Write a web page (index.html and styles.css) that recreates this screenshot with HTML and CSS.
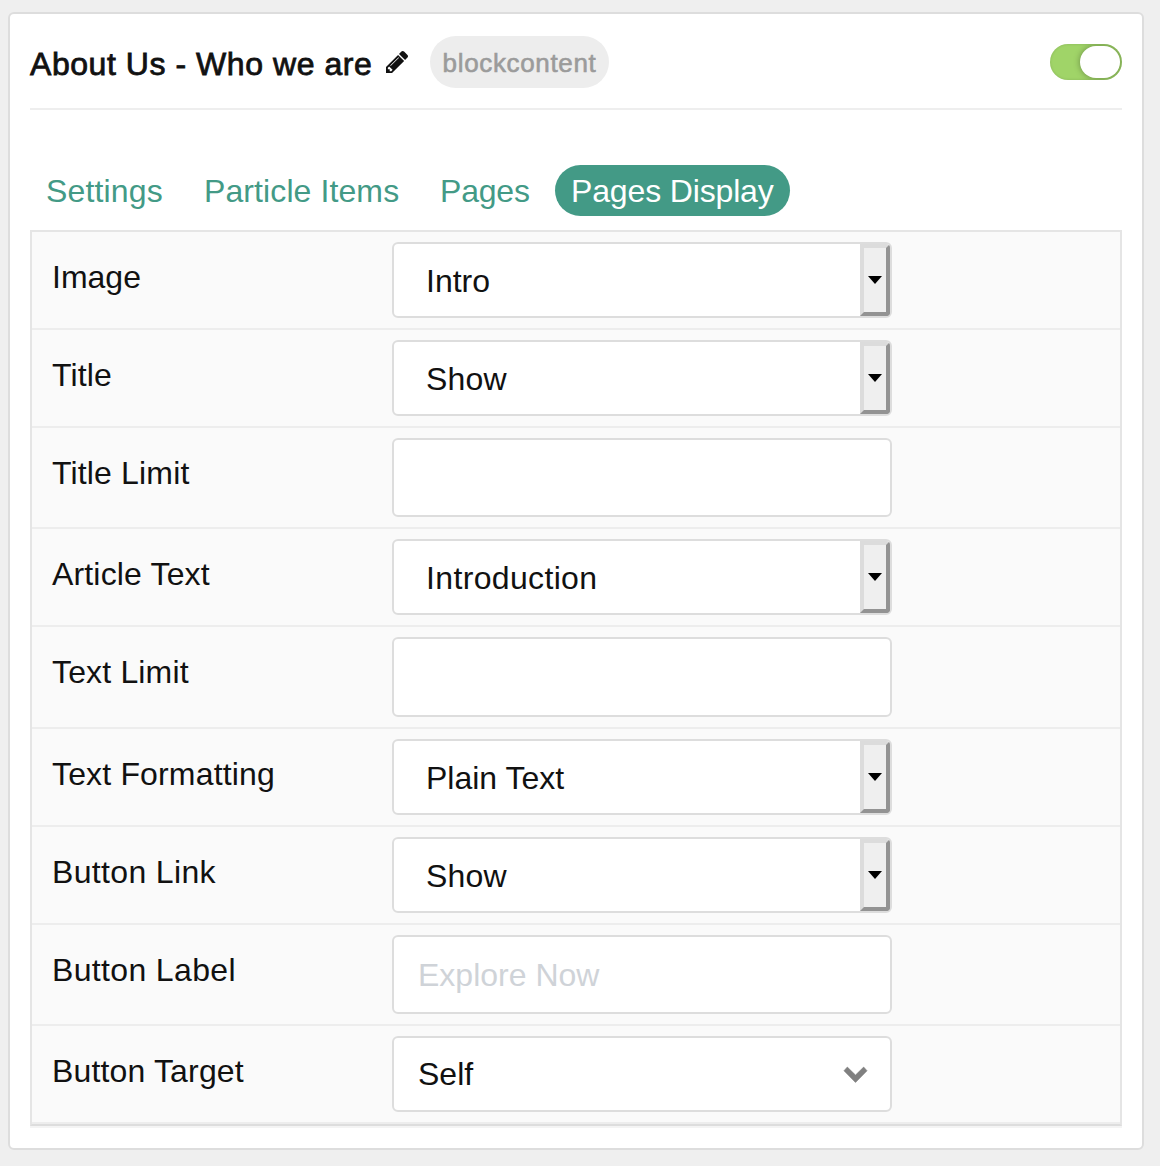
FILE: index.html
```html
<!DOCTYPE html>
<html lang="en">
<head>
<meta charset="utf-8">
<title>About Us - Who we are</title>
<link rel="stylesheet" href="styles.css">
</head>
<body>
<main class="card">
  <header class="card-header">
    <h1 class="title">About Us - Who we are</h1>
    <svg class="pencil" viewBox="128 149 1515 1515"><path d="M491 1536l91-91-235-235-91 91v107h128v128h107zm523-928q0-22-22-22-10 0-17 7l-542 542q-7 7-7 17 0 22 22 22 10 0 17-7l542-542q7-7 7-17zm-54-192l416 416-832 832h-416v-416zm683 96q0 53-37 90l-166 166-416-416 166-165q36-38 90-38 53 0 91 38l235 234q37 39 37 91z"/></svg>
    <span class="badge">blockcontent</span>
    <span class="toggle"><span class="knob"></span></span>
  </header>
  <nav class="tabs">
    <a class="tab tab-settings">Settings</a>
    <a class="tab tab-items">Particle Items</a>
    <a class="tab tab-pages">Pages</a>
    <a class="tab active">Pages Display</a>
  </nav>
  <section class="panel">
    <div class="row"><span class="label">Image</span><div class="field"><span class="value">Intro</span><span class="drop"><i class="caret"></i></span></div></div>
    <div class="row"><span class="label open">Title</span><div class="field"><span class="value open">Show</span><span class="drop"><i class="caret"></i></span></div></div>
    <div class="row text-row"><span class="label open">Title Limit</span><div class="field"></div></div>
    <div class="row"><span class="label open">Article Text</span><div class="field"><span class="value wide">Introduction</span><span class="drop"><i class="caret"></i></span></div></div>
    <div class="row text-row tall"><span class="label open">Text Limit</span><div class="field"></div></div>
    <div class="row"><span class="label open">Text Formatting</span><div class="field"><span class="value">Plain Text</span><span class="drop"><i class="caret"></i></span></div></div>
    <div class="row"><span class="label wide">Button Link</span><div class="field"><span class="value open">Show</span><span class="drop"><i class="caret"></i></span></div></div>
    <div class="row text-row"><span class="label wide">Button Label</span><div class="field"><span class="value placeholder">Explore Now</span></div></div>
    <div class="row"><span class="label open">Button Target</span><div class="field"><span class="value plain">Self</span><svg class="chevron" viewBox="0 0 69 46"><path d="M10 0L0 11L34.500 46L69 11L59 0L34.500 24Z"/></svg></div></div>
  </section>
</main>
</body>
</html>
```
FILE: styles.css
```css
* { box-sizing: border-box; }

body {
  margin: 0;
  padding: 12px 16px 16px 8px;
  background: #efefef;
  color: #111;
  font: 32px/40px "Liberation Sans", Arial, sans-serif;
}

.card {
  height: 1138px;
  padding: 0 20px;
  background: #fff;
  border: 2px solid #ddd;
  border-radius: 6px;
}

.card-header {
  display: flex;
  align-items: center;
  height: 96px;
  padding-top: 2px;
  border-bottom: 2px solid #eee;
}

.title {
  width: 356px;
  margin: 4px 0 0;
  font-size: 32px;
  font-weight: 400;
  line-height: 40px;
  white-space: nowrap;
  -webkit-text-stroke: 0.8px #111;
  letter-spacing: 0.55px;
}

.pencil {
  width: 22px;
  height: 22px;
  fill: #111;
}

.badge {
  width: 179px;
  height: 52px;
  margin-left: 22px;
  padding-top: 1px;
  border-radius: 26px;
  background: #ededed;
  color: #9b9b9b;
  font-size: 26px;
  line-height: 52px;
  text-align: center;
  -webkit-text-stroke: 0.6px #9b9b9b;
  letter-spacing: 0.65px;
}

.toggle {
  display: flex;
  justify-content: flex-end;
  width: 72px;
  height: 36px;
  margin-left: auto;
  padding: 2px;
  border-radius: 18px;
  background: #a0d468;
  box-shadow: inset 0 0 3px rgba(0, 0, 0, 0.15);
  overflow: hidden;
}

.knob {
  width: 40px;
  height: 32px;
  border-radius: 16px;
  background: #fff;
  box-shadow: 0 0 6px rgba(0, 0, 0, 0.35);
}

.tabs {
  display: flex;
  height: 51px;
  margin: 55px 0 14px;
}

.tab {
  padding: 0 16px;
  border-radius: 26px;
  color: #439a86;
  line-height: 52px;
  white-space: nowrap;
}

.tab-settings { width: 158px; letter-spacing: 0.15px; }
.tab-items { width: 236px; letter-spacing: 0.1px; }
.tab-pages { width: 131px; letter-spacing: -0.2px; }

.active {
  width: 235px;
  background: #439a86;
  color: #fff;
  letter-spacing: -0.15px;
}

.panel {
  background: #fafafa;
  border: 2px solid #e5e5e5;
  border-bottom-color: #ddd;
  box-shadow: 0 2px 0 #f4f4f4;
}

.row {
  display: flex;
  height: 98px;
  padding: 10px 20px;
  border-bottom: 2px solid #ededed;
}

.text-row { height: 101px; }
.tall { height: 102px; }

.label {
  width: 340px;
  padding-top: 15px;
}

.open { letter-spacing: 0.16px; }
.wide { letter-spacing: 0.35px; }

.field {
  display: flex;
  width: 500px;
  background: #fff;
  border: 2px solid #ddd;
  border-radius: 6px;
  overflow: hidden;
}

.value {
  flex: 1;
  padding: 17px 0 0 32px;
}

.plain { padding: 16px 0 0 24px; }

.placeholder {
  padding: 18px 0 0 24px;
  color: #cfd3d8;
}

.drop {
  display: flex;
  justify-content: center;
  width: 30px;
  padding-top: 28px;
  background: #efefef;
  border: 4px solid;
  border-color: #dcdcdc #939393 #939393 #dcdcdc;
}

.caret {
  height: 0;
  border: 7px solid transparent;
  border-top: 8px solid #000;
  border-bottom: 0;
}

.chevron {
  width: 23px;
  height: 15.5px;
  margin: 28.5px 23px 0 0;
  fill: #808080;
  stroke: #808080;
  stroke-width: 2;
  overflow: visible;
}
```
